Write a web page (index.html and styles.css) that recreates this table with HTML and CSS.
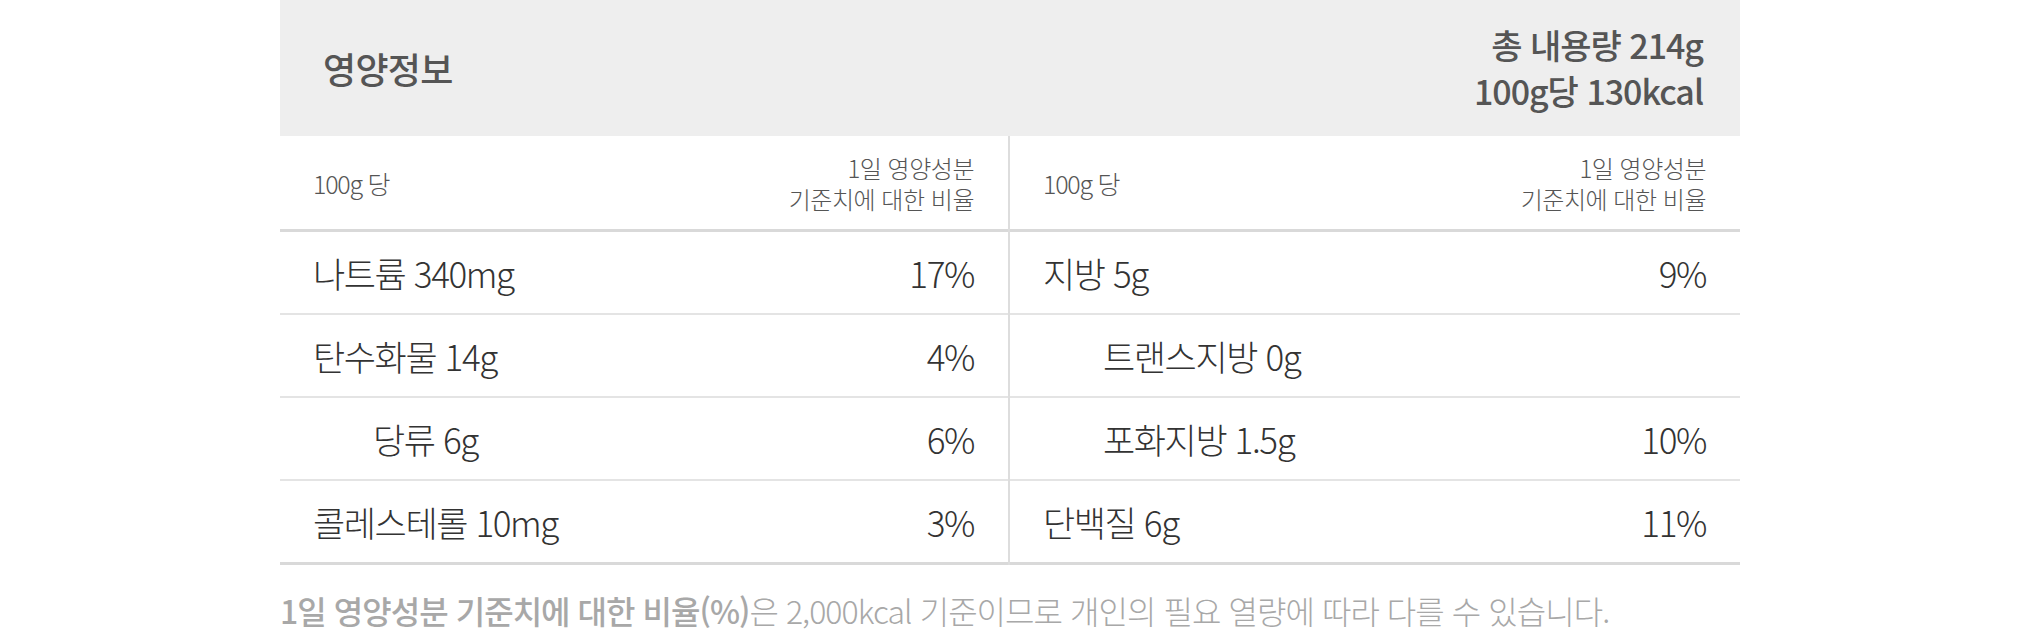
FILE: index.html
```html
<!DOCTYPE html>
<html lang="ko">
<head>
<meta charset="utf-8">
<title>영양정보</title>
<link rel="stylesheet" href="styles.css">
</head>
<body>
<div class="wrap">
  <div class="panel">
    <div class="head">
      <div class="title">영양정보</div>
      <div class="total">
        <div>총 내용량 214g</div>
        <div>100g당 130kcal</div>
      </div>
    </div>
    <div class="grid">
      <div class="col left">
        <div class="row sub"><span class="per">100g 당</span><span class="ratio"><span class="ln">1일 영양성분</span><span class="ln">기준치에 대한 비율</span></span></div>
        <div class="row"><span>나트륨 340mg</span><span>17%</span></div>
        <div class="row"><span>탄수화물 14g</span><span>4%</span></div>
        <div class="row"><span class="indent">당류 6g</span><span>6%</span></div>
        <div class="row last"><span>콜레스테롤 10mg</span><span>3%</span></div>
      </div>
      <div class="col">
        <div class="row sub"><span class="per">100g 당</span><span class="ratio"><span class="ln">1일 영양성분</span><span class="ln">기준치에 대한 비율</span></span></div>
        <div class="row"><span>지방 5g</span><span>9%</span></div>
        <div class="row"><span class="indent">트랜스지방 0g</span><span></span></div>
        <div class="row"><span class="indent">포화지방 1.5g</span><span>10%</span></div>
        <div class="row last"><span>단백질 6g</span><span>11%</span></div>
      </div>
    </div>
  </div>
  <p class="note"><b>1일 영양성분 기준치에 대한 비율(%)</b>은 2,000kcal 기준이므로 개인의 필요 열량에 따라 다를 수 있습니다.</p>
</div>
</body>
</html>
```
FILE: styles.css
```css
html, body {
  margin: 0;
  padding: 0;
  background: #ffffff;
}
body {
  font-family: "Noto Sans CJK KR", "Noto Sans", sans-serif;
  color: #333;
}
.wrap {
  width: 1460px;
  margin: 0 auto;
}
.head {
  height: 136px;
  background: #eeeeee;
  display: flex;
  justify-content: space-between;
  align-items: center;
  padding: 0 37px 0 43px;
  box-sizing: border-box;
}
.title {
  font-size: 36px;
  font-weight: 500;
  color: #555;
  letter-spacing: -0.02em;
}
.total {
  text-align: right;
  font-size: 34px;
  font-weight: 500;
  color: #555;
  line-height: 46px;
  letter-spacing: -0.03em;
}
.grid {
  display: grid;
  grid-template-columns: 1fr 1fr;
}
.col.left {
  border-right: 2px solid #dddddd;
}
.row {
  height: 83px;
  box-sizing: border-box;
  border-bottom: 2px solid #e4e4e4;
  display: flex;
  justify-content: space-between;
  align-items: center;
  padding: 0 34px 0 33px;
  font-size: 35px;
  font-weight: 300;
  color: #333;
  letter-spacing: -0.04em;
}
.row.sub {
  height: 96px;
  border-bottom: 3px solid #d9d9d9;
  color: #555;
}
.row.last {
  border-bottom: 3px solid #d9d9d9;
  height: 84px;
}
.per {
  font-size: 25px;
  letter-spacing: -0.05em;
}
.ratio {
  display: flex;
  flex-direction: column;
  align-items: flex-end;
  font-size: 24px;
  letter-spacing: -0.02em;
}
.ln {
  display: block;
  height: 31px;
  line-height: 31px;
}
.indent {
  margin-left: 60px;
}
.note {
  margin: 22px 0 0;
  font-size: 32px;
  line-height: 46px;
  font-weight: 300;
  color: #a8a8a8;
  letter-spacing: -0.03em;
}
.note b {
  font-weight: 500;
}
```
